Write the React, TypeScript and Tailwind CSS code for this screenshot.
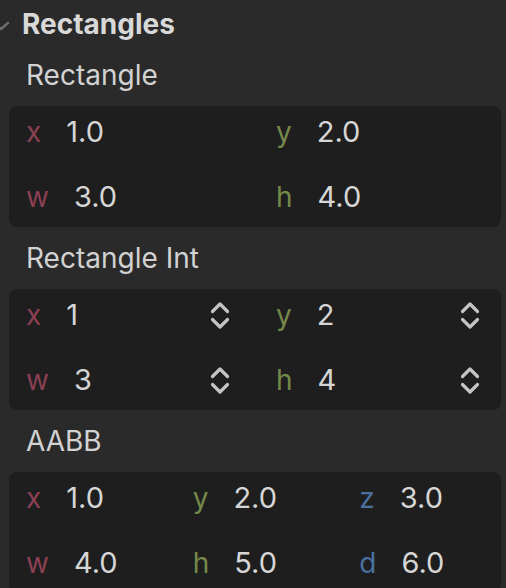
import React from "react";

const RED = "text-[#8a4052]";
const GREEN = "text-[#74894a]";
const BLUE = "text-[#4a71a0]";

function UpDown() {
  return (
    <svg width="20" height="29" viewBox="0 0 20 29" fill="none" className="shrink-0">
      <path d="M2.5 10.5 L10 3 L17.5 10.5" stroke="#c4c4c4" strokeWidth="3.2" strokeLinecap="round" strokeLinejoin="round" />
      <path d="M2.5 18.5 L10 26 L17.5 18.5" stroke="#c4c4c4" strokeWidth="3.2" strokeLinecap="round" strokeLinejoin="round" />
    </svg>
  );
}

type Field = { l: string; c: string; v: string };

function Cell({ f, spin }: { f: Field; spin?: boolean }) {
  return (
    <div className="flex items-center h-[44px]">
      <span className={`${f.c} mr-[25px]`}>{f.l}</span>
      <span className="flex-1 text-[29px] text-[#d6d6d6]">{f.v}</span>
      {spin && <UpDown />}
    </div>
  );
}

function Panel({ fields, cols, spin }: { fields: Field[]; cols: 2 | 3; spin?: boolean }) {
  return (
    <div className="ml-[9px] w-[492px] rounded-[8px] bg-[#1e1e1e] pl-[17px] pr-[21px] pt-[4px] pb-[8px]">
      <div className={`grid ${cols === 2 ? "grid-cols-2" : "grid-cols-3"} gap-x-[46px] gap-y-[21px]`}>
        {fields.map((f, i) => (
          <Cell key={i} f={f} spin={spin} />
        ))}
      </div>
    </div>
  );
}

function Label({ children }: { children: React.ReactNode }) {
  return <div className="pl-[26px] h-[40px] leading-[40px] text-[#d2d2d2]">{children}</div>;
}

export default function App() {
  return (
    <div
      className="h-[588px] w-[506px] overflow-hidden bg-[#2a2a2a] pt-[4px] flex flex-col gap-[11px] text-[28px]"
      style={{ fontFamily: "Inter, 'Noto Sans', sans-serif" }}
    >
      <div className="flex items-center h-[40px]">
        <svg width="10" height="12" viewBox="0 0 10 12" className="shrink-0 mt-[3px]">
          <path d="M-6 3 L1 9 L8 3" stroke="#6c6c6c" strokeWidth="2.6" fill="none" strokeLinecap="round" strokeLinejoin="round" />
        </svg>
        <span className="ml-[12px] text-[28px] font-bold leading-[40px] text-[#d8d8d8]">Rectangles</span>
      </div>
      <Label>Rectangle</Label>
      <Panel
        cols={2}
        fields={[
          { l: "x", c: RED, v: "1.0" },
          { l: "y", c: GREEN, v: "2.0" },
          { l: "w", c: RED, v: "3.0" },
          { l: "h", c: GREEN, v: "4.0" },
        ]}
      />
      <Label>Rectangle Int</Label>
      <Panel
        cols={2}
        spin
        fields={[
          { l: "x", c: RED, v: "1" },
          { l: "y", c: GREEN, v: "2" },
          { l: "w", c: RED, v: "3" },
          { l: "h", c: GREEN, v: "4" },
        ]}
      />
      <Label>AABB</Label>
      <Panel
        cols={3}
        fields={[
          { l: "x", c: RED, v: "1.0" },
          { l: "y", c: GREEN, v: "2.0" },
          { l: "z", c: BLUE, v: "3.0" },
          { l: "w", c: RED, v: "4.0" },
          { l: "h", c: GREEN, v: "5.0" },
          { l: "d", c: BLUE, v: "6.0" },
        ]}
      />
    </div>
  );
}
